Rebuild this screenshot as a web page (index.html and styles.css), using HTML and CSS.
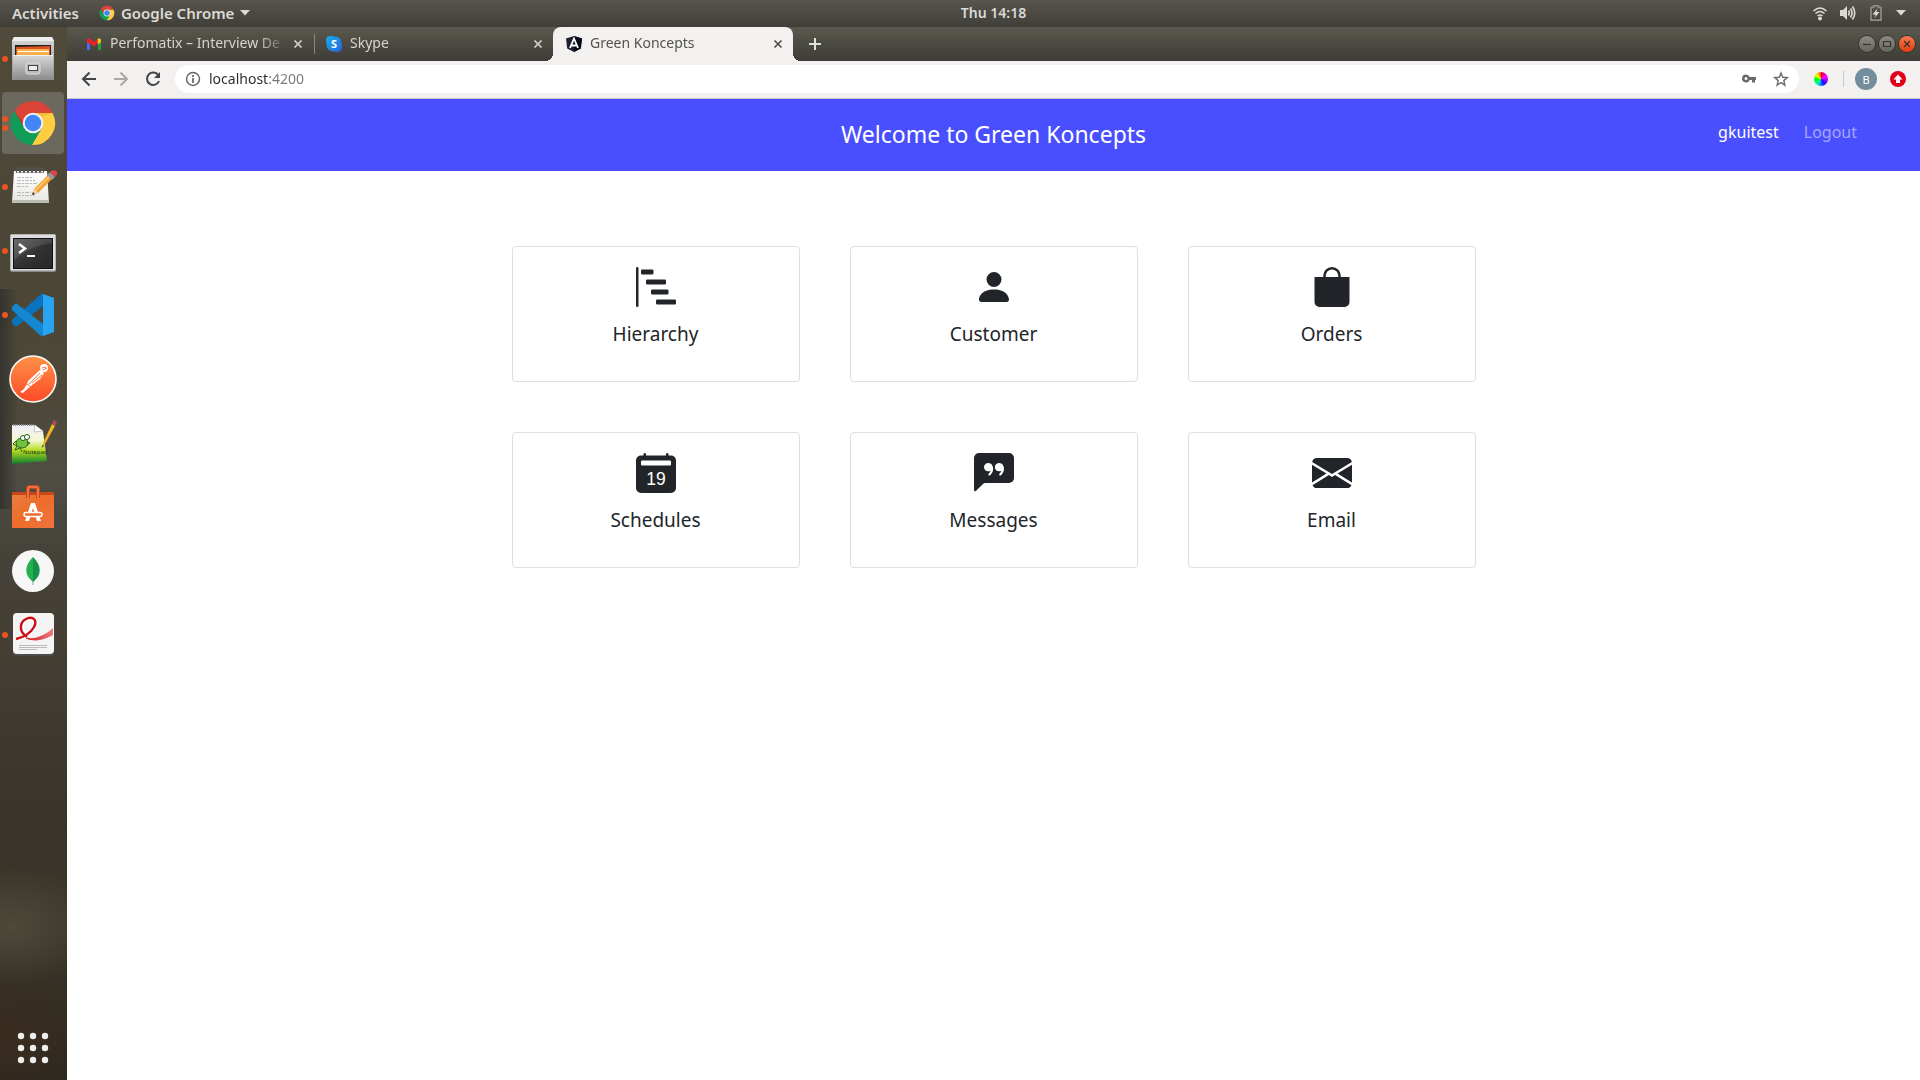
FILE: index.html
```html
<!DOCTYPE html>
<html lang="en">
<head>
<meta charset="utf-8">
<title>Green Koncepts</title>
<link rel="stylesheet" href="styles.css">
</head>
<body>
<svg class="defs" aria-hidden="true">
  <defs>
    <linearGradient id="steel" x1="0" y1="0" x2="0" y2="1"><stop offset="0" stop-color="#d8d8d8"/><stop offset="1" stop-color="#8e8e8e"/></linearGradient>
    <linearGradient id="paper" x1="0" y1="0" x2="0" y2="1"><stop offset="0" stop-color="#fff"/><stop offset="1" stop-color="#e6e8e4"/></linearGradient>
    <linearGradient id="screen" x1="0" y1="0" x2="1" y2="1"><stop offset="0" stop-color="#5a5a5a"/><stop offset=".5" stop-color="#333"/><stop offset="1" stop-color="#262626"/></linearGradient>
    <linearGradient id="orange" x1="0" y1="0" x2="0" y2="1"><stop offset="0" stop-color="#ff9248"/><stop offset="1" stop-color="#fc4a26"/></linearGradient>
    <linearGradient id="grass" x1="0" y1="0" x2="0" y2="1"><stop offset="0" stop-color="#eef0fb"/><stop offset=".4" stop-color="#f4f8d0"/><stop offset=".65" stop-color="#b5dc20"/><stop offset="1" stop-color="#0d7d2c"/></linearGradient>
    <linearGradient id="bag" x1="0" y1="0" x2="1" y2="1"><stop offset="0" stop-color="#e98040"/><stop offset=".5" stop-color="#ee6c2a"/><stop offset="1" stop-color="#f07440"/></linearGradient>
    <linearGradient id="ribbon"><stop offset="0" stop-color="#cc1016"/><stop offset="1" stop-color="#f07a7c"/></linearGradient>
    <linearGradient id="skype" x1="0" y1="0" x2="1" y2="1"><stop offset="0" stop-color="#12b2ee"/><stop offset="1" stop-color="#2a62d8"/></linearGradient>
  </defs>
  <symbol id="chrome" viewBox="0 0 48 48">
    <path fill="#db4437" d="M5.5 12A22 22 0 0 1 43.6 14H24l-8.7 15z"/>
    <path fill="#ffcd40" d="M43.6 14A22 22 0 0 1 22.9 46l9.8-17L24 14z"/>
    <path fill="#0f9d58" d="M22.9 46A22 22 0 0 1 5.5 12l9.8 17h17.4z"/>
    <path fill="#a52714" opacity=".45" d="M5.5 12l9.8 17L14 23z"/>
    <path fill="#c98d1c" opacity=".3" d="M24 14h19.600l-10.600 3z"/>
    <circle cx="24" cy="24" r="10.300" fill="#f1f1f1"/><circle cx="24" cy="24" r="8.300" fill="#4285f4"/>
  </symbol>
</svg>

<header class="topbar">
  <div class="topbar-left">
    <button class="plain">Activities</button>
    <button class="plain app-menu"><svg width="16" height="16"><use href="#chrome"/></svg>Google Chrome<svg width="10" height="6" viewBox="0 0 10 6"><path d="M0 0h10L5 5.500z" fill="currentColor"/></svg></button>
  </div>
  <button class="clock">Thu 14:18</button>
  <div class="tray">
    <svg width="16" height="16" viewBox="0 0 16 16" fill="none" stroke="currentColor" stroke-width="1.600"><path d="M1.500 6Q8 0 14.500 6M3.500 8.500Q8 4.500 12.500 8.500M5.500 11Q8 9 10.500 11"/><circle cx="8" cy="13.500" r="2" fill="currentColor" stroke="none"/></svg>
    <svg width="16" height="16" viewBox="0 0 16 16" fill="none" stroke="currentColor" stroke-width="1.700"><path d="M0 5h3l4-4v14l-4-4H0z" fill="currentColor" stroke="none"/><path d="M8.500 5.500q1.500 2.500 0 5M10.500 3.500q3 4.500 0 9M12.500 1.500q4.500 6.500 0 13"/></svg>
    <svg width="16" height="16" viewBox="0 0 16 16"><path d="M3 2.500h2.500V.8h5v1.700H13v12.700H3z" fill="none" stroke="#8d8c87" stroke-width="1.700"/><path d="M9.500 3.500L4.500 9.500h3L6.500 13l5-6H8.500z" fill="currentColor"/></svg>
    <svg width="10" height="6" viewBox="0 0 10 6"><path d="M0 0h10L5 5.500z" fill="currentColor"/></svg>
  </div>
</header>

<div class="desktop">
  <nav class="dock" aria-label="Applications">
    <button class="dock-item" aria-label="Files"><span class="dots"><i></i></span>
      <svg viewBox="0 0 48 48"><path d="M5 2h38l2 4v39H3V6z" fill="url(#steel)"/><path d="M5 2h38l2 4H3z" fill="#eee"/><path d="M6 10h36v10H6z" fill="#222"/><path d="M7 12l34-1v9H7z" fill="#d9541e"/><path d="M8 14h32v6H8z" fill="#f5b04c"/><path d="M9 16h31v1H9z" fill="#fff"/><path d="M4 20h40v24H4z" fill="url(#steel)"/><path d="M4 20h40v1H4z" fill="#f2f2f2"/><rect x="17" y="28" width="14" height="11" rx="2" fill="#bbb" stroke="#ddd"/><rect x="19.500" y="30.500" width="9" height="5" fill="#eee" stroke="#444"/></svg></button>
    <button class="dock-item current" aria-label="Google Chrome"><span class="dots"><i></i><i></i></span><svg><use href="#chrome"/></svg></button>
    <button class="dock-item" aria-label="Text Editor"><span class="dots"><i></i></span>
      <svg viewBox="0 0 48 48"><path d="M5 8h33l2 32H3z" fill="url(#paper)"/><path d="M3 37h37v3H3z" fill="#b9bdb6"/><g fill="none" stroke="#555" stroke-width="1.300"><path d="M8 10q-2-5 1-5t1 5M12 10q-2-5 1-5t1 5M16 10q-2-5 1-5t1 5M20 10q-2-5 1-5t1 5M24 10q-2-5 1-5t1 5M28 10q-2-5 1-5t1 5M32 10q-2-5 1-5t1 5"/></g><path d="M8 14.500h15M8 17.500h18M8 20.500h20M8 23.500h11M8 29.500h14M8 32.500h18" stroke="#bbb" stroke-dasharray="4 1 2 1"/><path d="M23 32l2-6L40 11l4 4-15 15z" fill="#f5a033"/><path d="M26 28L41 13" stroke="#ffcf78" stroke-width="1.500"/><path d="M23 32l2-6 4 4z" fill="#f0d7ad"/><path d="M23 32l1-3 2 2z" fill="#222"/><path d="M38 12l3-3 5 5-3 3z" fill="#999"/><path d="M41 9q3-3 6-1t-1 6z" fill="#e0434c"/></svg></button>
    <button class="dock-item" aria-label="Terminal"><span class="dots"><i></i></span>
      <svg viewBox="0 0 48 48"><rect x="1" y="7" width="46" height="38" rx="2" fill="#8a8a8a"/><rect x="1.500" y="7.500" width="45" height="36" rx="1" fill="#ddd"/><rect x="4.500" y="11.500" width="39" height="30" fill="url(#screen)" stroke="#111"/><path d="M5 12h38v4Q20 19 5 33z" fill="#fff" opacity=".1"/><path d="M10 17l6 4.500-6 4.500" fill="none" stroke="#fff" stroke-width="2.500"/><path d="M18 29h8" stroke="#fff" stroke-width="2"/></svg></button>
    <button class="dock-item" aria-label="Visual Studio Code"><span class="dots"><i></i></span>
      <svg viewBox="0 0 48 48"><path d="M34 3v12L8 35q-1.500.500-2.500-.500L3 32v-3L31 4q1.500-1.500 3-1z" fill="#0b72bd"/><path d="M34 45V33L8 13q-1.500-.500-2.500.500L3 16v3l28 25q1.500 1.500 3 1z" fill="#1588d1"/><path d="M34 3l11 4v34l-11 4q0-1 0-3V6q0-2 0-3z" fill="#28a4f2"/></svg></button>
    <button class="dock-item" aria-label="Postman">
      <svg viewBox="0 0 48 48"><circle cx="24" cy="24" r="23" fill="url(#orange)" stroke="#fff" stroke-width="1.600"/><circle cx="35" cy="13" r="4" fill="#fff"/><path d="M31 15L19 26l-1 3-3 5-4 3 3 1 2-2 7-6 8-6 4-6z" fill="#fff"/><path d="M31 18L20 29M33 20l-10 8M33 13l4-1M34 15l4-2M18 29l3 2" stroke="#fc6e38" fill="none"/></svg></button>
    <button class="dock-item" aria-label="Notepadqq">
      <svg viewBox="0 0 48 48"><path d="M3 6h23l8 6 4 30-35 3z" fill="url(#grass)"/><path d="M26 6l-1 7 9-1z" fill="#fff" stroke="#999" stroke-width=".5"/><path d="M4 6h21" stroke="#888" stroke-width="2" stroke-dasharray="1 1"/><g fill="#6fc13e" stroke="#245c1c"><ellipse cx="13" cy="24" rx="6" ry="5"/><circle cx="14" cy="19" r="2.500" fill="#fff"/><circle cx="18" cy="18" r="2.500" fill="#fff"/><path d="M7 22l-3 3 4 2-2 4 5-2 2 4M18 23l3 1-3 2" fill="none"/></g><text x="14" y="35" class="tiny-mark">Notepad</text><path d="M33 29l1-5L43 5l3 2-10 18z" fill="#edb51f"/><path d="M33 29l.7-3 1.300.8z" fill="#222"/><path d="M43 5l2-4 3 2-2 4z" fill="#b34b60"/></svg></button>
    <button class="dock-item" aria-label="Software">
      <svg viewBox="0 0 48 48"><path d="M3 9h42v36H3z" fill="url(#bag)"/><path d="M3 9h42v3H3z" fill="#c5481c"/><path d="M19 15V6q0-2 2-2h6q2 0 2 2v9" fill="none" stroke="#c5481c" stroke-width="4"/><path d="M19 15V6q0-2 2-2h6q2 0 2 2v9" fill="none" stroke="#ee7340" stroke-width="2"/><path d="M16 38l6-18h4l6 18h-4l-4-13-4 13z" fill="#fff"/><rect x="15" y="29.500" width="18" height="4" rx="2" fill="#ee6c2a" stroke="#fff" stroke-width="1.500"/></svg></button>
    <button class="dock-item" aria-label="MongoDB Compass">
      <svg viewBox="0 0 48 48"><circle cx="24" cy="24" r="21" fill="#f7f7f7"/><path d="M24 33v5" stroke="#999"/><path d="M24 10c-9 9-9 18 0 25z" fill="#22b14c"/><path d="M24 10c9 9 9 18 0 25z" fill="#159246"/></svg></button>
    <button class="dock-item" aria-label="Document Viewer"><span class="dots"><i></i></span>
      <svg viewBox="0 0 48 48"><rect x="4" y="3" width="41" height="42" rx="4" fill="#555" opacity=".6"/><rect x="4" y="2" width="41" height="41" rx="4" fill="#f4f4f4"/><path d="M15 25q5 4 14 1 9-3 15-9v7q-12 7-22 5-6-1-7-4z" fill="url(#ribbon)"/><path d="M7 28q13-3 18-12c4-8-2-11-8-8s-6 12 0 16" fill="none" stroke="#fff" stroke-width="5"/><path d="M7 28q13-3 18-12c4-8-2-11-8-8s-8 12 1 18" fill="none" stroke="#cc1016" stroke-width="2.500"/><path d="M10 34.500h28M10 36.500h28M10 38.500h18" stroke="#bbb"/></svg></button>
    <button class="dock-item dock-apps" aria-label="Show Applications">
      <svg viewBox="0 0 48 48" fill="#eeeeec"><circle cx="12" cy="12" r="3.200"/><circle cx="24" cy="12" r="3.200"/><circle cx="36" cy="12" r="3.200"/><circle cx="12" cy="24" r="3.200"/><circle cx="24" cy="24" r="3.200"/><circle cx="36" cy="24" r="3.200"/><circle cx="12" cy="36" r="3.200"/><circle cx="24" cy="36" r="3.200"/><circle cx="36" cy="36" r="3.200"/></svg></button>
  </nav>

  <div class="browser">
    <div class="tabstrip">
      <div class="tab divided">
        <svg width="16" height="16" viewBox="0 0 16 16"><path d="M1 3h3v11H2q-1 0-1-1z" fill="#4a6cf0"/><path d="M12 3h3v10q0 1-1 1h-2z" fill="#24a148"/><path d="M1 7V4q1-3 3.500-1L8 6l3.500-3L12 7l-4 3.500L4 7v1z" fill="#e9232c"/><path d="M11.500 3Q14 1 15 4v2l-3 2.500z" fill="#f5c316"/></svg>
        <span class="tab-title">Perfomatix – Interview De</span>
        <button class="tab-close" aria-label="Close tab"><svg width="10" height="10" viewBox="0 0 10 10"><path d="M1.500 1.500l7 7m0-7l-7 7"/></svg></button>
      </div>
      <div class="tab">
        <svg width="16" height="16" viewBox="0 0 16 16"><path d="M1 1q4-2 7-.5 8 0 7.500 7.500 1.500 4-1 7-3 1.500-6 .5Q.5 15.500.5 8-.5 4 1 1z" fill="url(#skype)"/><text x="8" y="12" class="skype-mark">S</text></svg>
        <span class="tab-title">Skype</span>
        <button class="tab-close" aria-label="Close tab"><svg width="10" height="10" viewBox="0 0 10 10"><path d="M1.500 1.500l7 7m0-7l-7 7"/></svg></button>
      </div>
      <div class="tab active">
        <svg width="16" height="16" viewBox="0 0 16 16"><path d="M8 0l8 2.500-1.200 10L8 16l-6.800-3.500L0 2.500z" fill="#1c2030"/><path d="M8 0l8 2.500-1.200 10L8 16z" fill="#060814"/><path d="M4 12L8 2.500 12 12M5.500 9.500h5" fill="none" stroke="#fff" stroke-width="1.800"/></svg>
        <span class="tab-title">Green Koncepts</span>
        <button class="tab-close" aria-label="Close tab"><svg width="10" height="10" viewBox="0 0 10 10"><path d="M1.500 1.500l7 7m0-7l-7 7"/></svg></button>
      </div>
      <button class="new-tab" aria-label="New tab"><svg width="12" height="12" viewBox="0 0 12 12"><path d="M6 0v12M0 6h12" stroke="#e0e0dc" stroke-width="2"/></svg></button>
      <div class="window-buttons">
        <button aria-label="Minimize"><svg viewBox="0 0 16 16"><path d="M4 8.500h8"/></svg></button>
        <button aria-label="Maximize"><svg viewBox="0 0 16 16"><path d="M4.500 5.500h7v5h-7z"/></svg></button>
        <button class="window-close" aria-label="Close"><svg viewBox="0 0 16 16"><path d="M5 5l6 6m0-6l-6 6"/></svg></button>
      </div>
    </div>

    <div class="toolbar">
      <div class="nav-buttons">
        <button aria-label="Back"><svg width="16" height="16" viewBox="0 0 16 16"><path d="M15 8H2m6.500-6.500L2 8l6.500 6.500"/></svg></button>
        <button class="dim" aria-label="Forward"><svg width="16" height="16" viewBox="0 0 16 16"><path d="M1 8h13M7.500 1.500L14 8l-6.500 6.500"/></svg></button>
        <button aria-label="Reload"><svg width="16" height="16" viewBox="0 0 16 16"><path d="M13.500 4.500A6.200 6.200 0 1 0 14 10"/><path d="M15 1v6H9z" fill="currentColor" class="reload-tip"/></svg></button>
      </div>
      <div class="omnibox">
        <svg width="16" height="16" viewBox="0 0 16 16" fill="none" stroke="#5f6368" stroke-width="1.400"><circle cx="8" cy="8" r="6.500"/><path d="M8 7v5M8 4v2" stroke-width="1.700"/></svg>
        <input class="url" type="text" value="localhost:4200" aria-label="Address">
        <button aria-label="Saved passwords"><svg width="16" height="16" viewBox="0 0 16 16"><path fill="#6a6a6a" fill-rule="evenodd" d="M5 3.500a4 4 0 1 0 3.700 5.500H11v2.500h3V9h1V6H8.700A4 4 0 0 0 5 3.500zM5 6a1.500 1.500 0 1 1 0 3 1.500 1.500 0 0 1 0-3z"/></svg></button>
        <button aria-label="Bookmark this page"><svg width="16" height="16" viewBox="0 0 16 16"><path fill="none" stroke="#6a6a6a" stroke-width="1.400" d="M8 2l1.700 4.300 4.600.3-3.500 3 1.100 4.500L8 11.600l-3.900 2.500 1.100-4.500-3.500-3 4.600-.3z"/></svg></button>
      </div>
      <button class="color-wheel" aria-label="Color picker"></button>
      <span class="toolbar-divider"></span>
      <button class="avatar" aria-label="Profile">B</button>
      <button class="update" aria-label="Update"><svg width="16" height="16" viewBox="0 0 16 16"><circle cx="8" cy="8" r="8" fill="#e1001a"/><path d="M8 3.500l4.500 5H10V12H6V8.500H3.500z" fill="#fff"/></svg></button>
    </div>

    <div class="page">
      <header class="page-header">
        <h1>Welcome to Green Koncepts</h1>
        <nav class="user-nav"><a href="#">gkuitest</a><a class="muted" href="#">Logout</a></nav>
      </header>
      <main class="cards">
        <a class="card" href="#"><svg viewBox="0 0 16 16"><path d="M.5 0a.5.5 0 0 1 .5.5v15a.5.5 0 0 1-1 0V.5A.5.5 0 0 1 .5 0zM2 1.500a.5.5 0 0 1 .5-.5h4a.5.5 0 0 1 .5.5v1a.5.5 0 0 1-.5.5h-4a.5.5 0 0 1-.5-.5zM4 5.500a.5.5 0 0 1 .5-.5h7a.5.5 0 0 1 .5.5v1a.5.5 0 0 1-.5.5h-7a.5.5 0 0 1-.5-.5zM6 9.500a.5.5 0 0 1 .5-.5h6a.5.5 0 0 1 .5.5v1a.5.5 0 0 1-.5.5h-6a.5.5 0 0 1-.5-.5zM8 13.500a.5.5 0 0 1 .5-.5h7a.5.5 0 0 1 .5.5v1a.5.5 0 0 1-.5.5h-7a.5.5 0 0 1-.5-.5z"/></svg><h2>Hierarchy</h2></a>
        <a class="card" href="#"><svg viewBox="0 0 16 16"><path d="M3 14s-1 0-1-1 1-4 6-4 6 3 6 4-1 1-1 1H3zm5-6a3 3 0 1 0 0-6 3 3 0 0 0 0 6z"/></svg><h2>Customer</h2></a>
        <a class="card" href="#"><svg viewBox="0 0 16 16"><path fill-rule="evenodd" d="M8 1a2.500 2.500 0 0 0-2.500 2.500V4h5v-.5A2.500 2.500 0 0 0 8 1zm3.500 3v-.5a3.500 3.500 0 1 0-7 0V4H1v10a2 2 0 0 0 2 2h10a2 2 0 0 0 2-2V4h-3.500z"/></svg><h2>Orders</h2></a>
        <a class="card" href="#"><svg viewBox="0 0 16 16"><path d="M3.500 0a.5.5 0 0 1 .5.5V1h8V.5a.5.5 0 0 1 1 0V1h1a2 2 0 0 1 2 2v11a2 2 0 0 1-2 2H2a2 2 0 0 1-2-2V3a2 2 0 0 1 2-2h1V.5a.5.5 0 0 1 .5-.5zm9.954 3H2.545c-.3 0-.545.224-.545.5v1c0 .276.244.5.545.5h10.910c.3 0 .545-.224.545-.5v-1c0-.276-.244-.5-.546-.5z"/><text x="8" y="12.700" class="date-mark">19</text></svg><h2>Schedules</h2></a>
        <a class="card" href="#"><svg viewBox="0 0 16 16"><path d="M0 2a2 2 0 0 1 2-2h12a2 2 0 0 1 2 2v8a2 2 0 0 1-2 2H4.414a1 1 0 0 0-.707.293L.854 15.146A.5.5 0 0 1 0 14.793V2zm7.194 2.766a1.688 1.688 0 0 0-.227-.272 1.467 1.467 0 0 0-.469-.324l-.008-.004A1.785 1.785 0 0 0 5.734 4C4.776 4 4 4.746 4 5.667c0 .92.776 1.666 1.734 1.666.343 0 .662-.095.931-.26-.137.389-.39.804-.81 1.220a.405.405 0 0 0 .011.59c.173.16.447.155.614-.01 1.334-1.329 1.370-2.758.941-3.706a2.461 2.461 0 0 0-.227-.4zM11 7.073c-.136.389-.39.804-.81 1.220a.405.405 0 0 0 .012.59c.172.16.446.155.613-.01 1.334-1.329 1.370-2.758.942-3.706a2.466 2.466 0 0 0-.228-.4 1.686 1.686 0 0 0-.227-.273 1.466 1.466 0 0 0-.469-.324l-.008-.004A1.785 1.785 0 0 0 10.070 4c-.957 0-1.734.746-1.734 1.667 0 .92.777 1.666 1.734 1.666.343 0 .662-.095.931-.26z"/></svg><h2>Messages</h2></a>
        <a class="card" href="#"><svg viewBox="0 0 16 16"><path d="M.05 3.555A2 2 0 0 1 2 2h12a2 2 0 0 1 1.950 1.555L8 8.414.05 3.555zM0 4.697v7.104l5.803-3.558L0 4.697zM6.761 8.830l-6.570 4.027A2 2 0 0 0 2 14h12a2 2 0 0 0 1.808-1.144l-6.570-4.027L8 9.586l-1.239-.757zm3.436-.586L16 11.801V4.697l-5.803 3.546z"/></svg><h2>Email</h2></a>
      </main>
    </div>
  </div>
</div>
</body>
</html>
```
FILE: styles.css
```css
* { box-sizing: border-box; }
body {
  margin: 0;
  min-height: 100vh;
  display: flex;
  flex-direction: column;
  font-family: "Noto Sans", "Open Sans", sans-serif;
  font-size: 14px;
  color: #212529;
}
button {
  padding: 0;
  border: 0;
  background: none;
  font: inherit;
  color: inherit;
  display: flex;
  align-items: center;
  justify-content: center;
}
a { text-decoration: none; color: inherit; }
h1, h2 { margin: 0; font-weight: 400; }
svg { display: block; flex: none; }
.defs { position: absolute; width: 0; height: 0; }

/* System bar */
.topbar {
  height: 27px;
  display: grid;
  grid-template-columns: 67px 1fr auto 1fr;
  align-items: center;
  padding-bottom: 2px;
  background: linear-gradient(#59554d, #3f3e39);
  color: #dcdad5;
  font-weight: 600;
  line-height: 20px;
}
.topbar-left, .tray { display: flex; align-items: center; }
.topbar-left { grid-column: 1 / 3; gap: 20px; padding-left: 12px; font-size: 15px; }
.app-menu { gap: 6px; }
.tray { justify-content: flex-end; gap: 12px; padding-right: 14px; }

.desktop { flex: 1; display: flex; }

/* Dock */
.dock {
  width: 67px;
  flex: none;
  display: flex;
  flex-direction: column;
  gap: 2px;
  padding: 1px 3px 1px 2px;
  background:
    linear-gradient(to right, #35332f, #35332f00) 0 262px / 18px 220px no-repeat,
    radial-gradient(ellipse 90px 60px at 10px 900px, #4e4939, #4e493900),
    radial-gradient(ellipse 80px 70px at 10px 1010px, #3a2c1f, #3a2c1f00),
    linear-gradient(#4f4a3a, #4b4636 20%, #4d4838 36%, #504d44 42%, #45423a 50%, #453f34 58%, #38342a 76%, #3c3629 84%, #2c2820);
}
.dock-item { position: relative; height: 62px; border-radius: 4px; }
.dock-item svg { width: 48px; height: 48px; }
.dock-item.current { background: #6b685d; }
.dock-apps { margin-top: auto; }
.dots {
  position: absolute;
  left: 0;
  top: 0;
  bottom: 0;
  display: flex;
  flex-direction: column;
  justify-content: center;
  gap: 3px;
}
.dots i { width: 6px; height: 6px; border-radius: 50%; background: #e95420; }
.tiny-mark { font-size: 6px; fill: #1d3b14; }

/* Browser frame */
.browser { flex: 1; min-width: 0; display: flex; flex-direction: column; background: #fff; }
.tabstrip {
  height: 34px;
  display: flex;
  padding: 0 5px 0 6px;
  background: linear-gradient(#5a594f, #3d3c36);
  color: #d5d3cc;
}
.tab {
  position: relative;
  width: 240px;
  display: flex;
  align-items: center;
  gap: 8px;
  padding: 0 7px 1px 13px;
}
.tab.divided::after {
  content: "";
  position: absolute;
  right: -2px;
  top: 7px;
  width: 1px;
  height: 20px;
  background: #8a8981;
}
.tab-title {
  flex: 1;
  overflow: hidden;
  white-space: nowrap;
  line-height: 20px;
  padding-bottom: 1px;
  mask-image: linear-gradient(to right, #000 148px, transparent 178px);
}
.tab-close { width: 16px; height: 16px; }
.tab-close path { stroke: currentColor; stroke-width: 1.700; }
.tab.active { background: #f2f1f0; color: #53524e; border-radius: 8px 8px 0 0; }
.tab.active::before, .tab.active::after {
  content: "";
  position: absolute;
  bottom: 0;
  width: 8px;
  height: 8px;
}
.tab.active::before { left: -8px; background: radial-gradient(circle at 0 0, transparent 8px, #f2f1f0 8px); }
.tab.active::after { right: -8px; background: radial-gradient(circle at 100% 0, transparent 8px, #f2f1f0 8px); }
.new-tab { width: 44px; }
.window-buttons { margin-left: auto; display: flex; align-items: center; gap: 4px; }
.window-buttons button {
  width: 16px;
  height: 16px;
  border-radius: 50%;
  background: linear-gradient(#8b8a83, #65645d);
  box-shadow: 0 0 0 1px #34332e;
}
.window-buttons svg { width: 16px; height: 16px; }
.window-buttons .window-close { background: linear-gradient(#f57a50, #e63c0a); }
.window-buttons path { fill: none; stroke: #34332e; stroke-width: 1.200; }

.toolbar {
  height: 38px;
  display: flex;
  align-items: center;
  padding: 0 14px 1px;
  background: #f2f1f0;
  border-bottom: 1px solid #c9c8c4;
}
.nav-buttons { display: flex; gap: 16px; margin-right: 14px; color: #444; }
.nav-buttons path { fill: none; stroke: currentColor; stroke-width: 2; }
.nav-buttons .reload-tip { fill: currentColor; stroke: none; }
.nav-buttons .dim { color: #aaa9a7; }
.omnibox {
  flex: 1;
  height: 28px;
  display: flex;
  align-items: center;
  gap: 16px;
  padding: 0 10px;
  border-radius: 14px;
  background: #fff;
}
.url {
  flex: 1;
  min-width: 0;
  height: 20px;
  margin-left: -8px;
  padding: 0;
  border: 0;
  outline: 0;
  font: inherit;
  line-height: 20px;
  color: transparent;
  background: linear-gradient(to right, #2b2b2b 60px, #777 60px);
  background-clip: text;
}
.color-wheel {
  width: 14px;
  height: 14px;
  margin: 0 15px;
  border-radius: 50%;
  background: conic-gradient(#e00030, #f0f 60deg, #a0f 100deg, #20f 150deg, #0af 190deg, #0f8 220deg, #0f0 270deg, #ff0 310deg, #f40);
}
.toolbar-divider { width: 1px; height: 16px; background: #c8c7c5; }
.avatar {
  width: 22px;
  height: 22px;
  margin: 0 13px 0 11px;
  border-radius: 50%;
  background: #738d9c;
  color: #fff;
  font-size: 11px;
}

/* Page */
.page-header {
  height: 72px;
  display: grid;
  grid-template-columns: 1fr auto 1fr;
  align-items: center;
  padding: 0 63px 2px;
  background: #494fff;
  color: #fff;
}
.page-header h1 { grid-column: 2; font-size: 23px; line-height: 32px; }
.user-nav {
  display: flex;
  justify-content: flex-end;
  gap: 25px;
  padding-bottom: 4px;
  font-size: 16px;
  line-height: 24px;
}
.user-nav .muted { color: #a4a7ff; }
.cards {
  max-width: 964px;
  margin: 75px auto;
  display: grid;
  grid-template-columns: repeat(3, 1fr);
  gap: 50px;
}
.card {
  display: flex;
  flex-direction: column;
  align-items: center;
  gap: 15px;
  padding: 20px 20px 35px;
  border: 1px solid #dfdfdf;
  border-radius: 4px;
}
.card svg { width: 40px; height: 40px; fill: #212529; }
.card h2 { font-size: 19px; line-height: 24px; }
.card .date-mark { font-family: "Liberation Sans", sans-serif; font-size: 7px; fill: #fff; text-anchor: middle; }
.skype-mark { font-size: 11px; font-weight: 700; fill: #fff; text-anchor: middle; }
```
